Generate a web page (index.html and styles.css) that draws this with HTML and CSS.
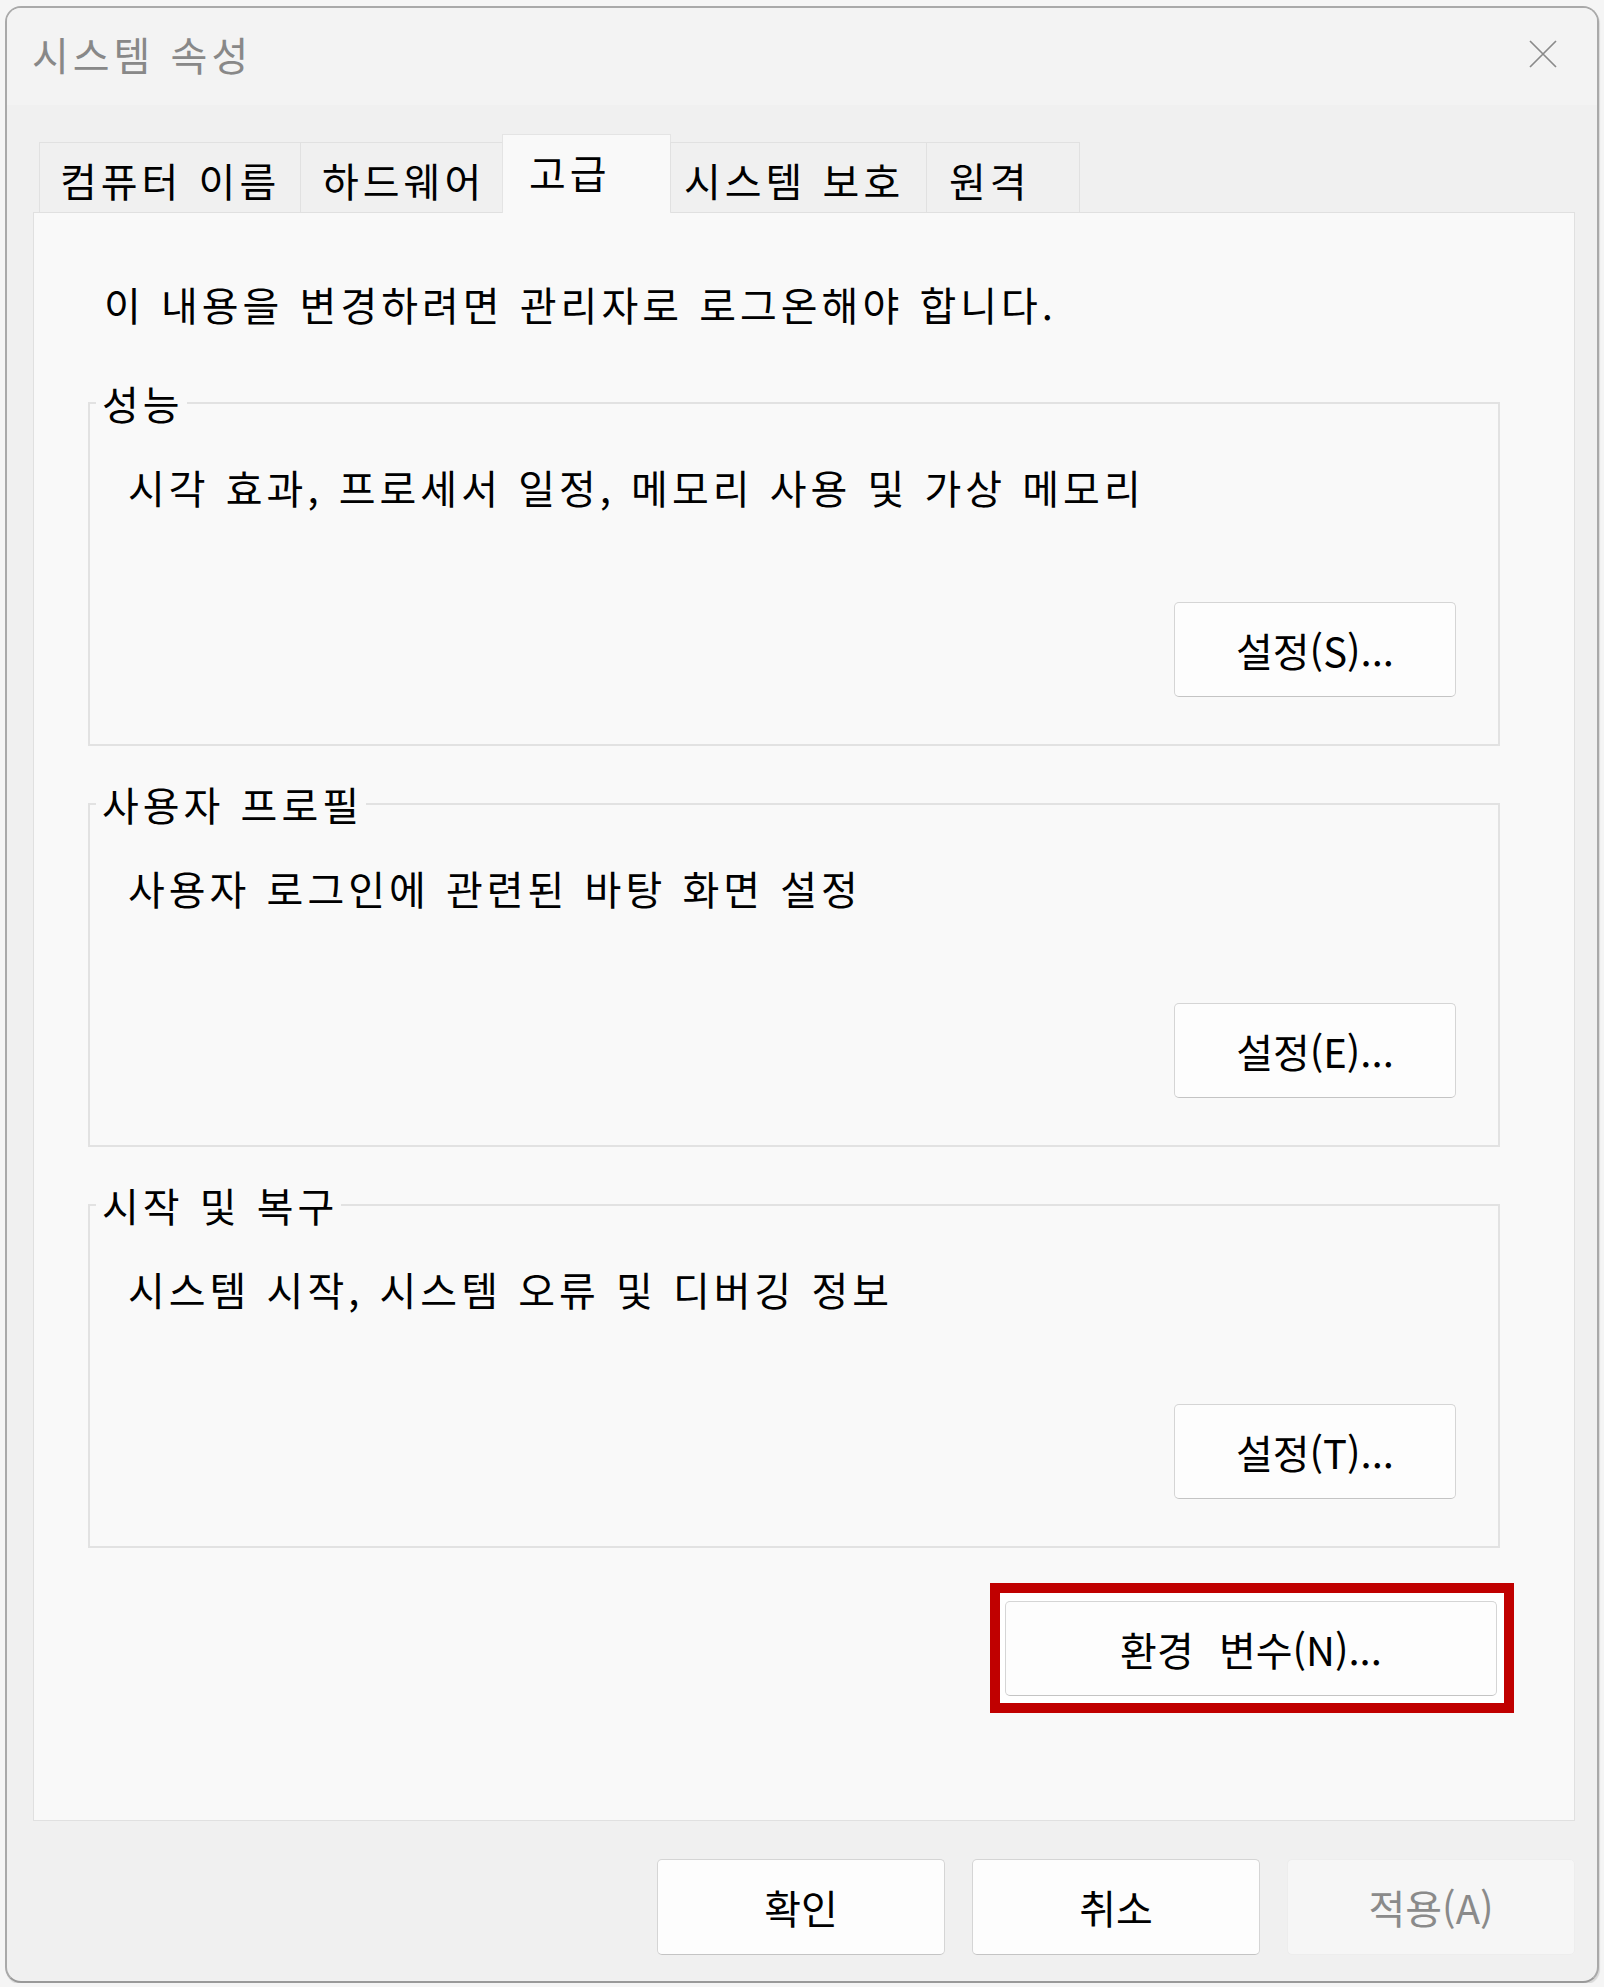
FILE: index.html
```html
<!DOCTYPE html>
<html lang="ko">
<head>
<meta charset="utf-8">
<title>시스템 속성</title>
<link rel="stylesheet" href="styles.css">
</head>
<body>
<div class="window">
  <div class="titlebar">
    <span class="title">시스템 속성</span>
    <svg class="close" viewBox="0 0 28 28" aria-label="닫기"><path d="M1 1L27 27M27 1L1 27" fill="none" stroke="#8a8a8a" stroke-width="1.7"/></svg>
  </div>
  <div class="content">
    <div class="tabs">
      <div class="tab t1">컴퓨터 이름</div>
      <div class="tab t2">하드웨어</div>
      <div class="tab t3 active">고급</div>
      <div class="tab t4">시스템 보호</div>
      <div class="tab t5">원격</div>
    </div>
    <div class="panel">
      <p class="notice">이 내용을 변경하려면 관리자로 로그온해야 합니다.</p>
      <fieldset class="group">
        <legend>성능</legend>
        <p class="desc">시각 효과, 프로세서 일정, 메모리 사용 및 가상 메모리</p>
        <div class="btnrow"><button class="btn">설정(S)...</button></div>
      </fieldset>
      <fieldset class="group">
        <legend>사용자 프로필</legend>
        <p class="desc">사용자 로그인에 관련된 바탕 화면 설정</p>
        <div class="btnrow"><button class="btn">설정(E)...</button></div>
      </fieldset>
      <fieldset class="group">
        <legend>시작 및 복구</legend>
        <p class="desc">시스템 시작, 시스템 오류 및 디버깅 정보</p>
        <div class="btnrow"><button class="btn">설정(T)...</button></div>
      </fieldset>
      <div class="envrow">
        <div class="highlight"><button class="btn wide">환경 변수(N)...</button></div>
      </div>
    </div>
    <div class="actions">
      <button class="btn action">확인</button>
      <button class="btn action">취소</button>
      <button class="btn action disabled">적용(A)</button>
    </div>
  </div>
</div>
</body>
</html>
```
FILE: styles.css
```css
* { box-sizing: border-box; }
html, body { margin: 0; }
body {
  background: #f5f5f5;
  font-family: "Noto Sans CJK KR", "Noto Sans", sans-serif;
  font-size: 40px;
  color: #000;
  letter-spacing: 4px;
  word-spacing: 1px;
}
.window {
  margin: 6px 0 0 5px;
  width: 1594px;
  height: 1977px;
  border: 2px solid #a9a9a9;
  border-bottom-color: #999;
  border-radius: 16px;
  background: #f0f0f0;
  overflow: hidden;
  display: flex;
  flex-direction: column;
  box-shadow: 1px 2px 1px rgba(0, 0, 0, 0.12);
}
.titlebar {
  height: 97px;
  flex: none;
  background: #f3f3f3;
  display: flex;
  align-items: center;
  justify-content: space-between;
  padding: 0 40px 5px 25px;
}
.title { color: #888; line-height: 48px; }
.close { width: 28px; height: 28px; display: block; }
.content {
  flex: 1;
  padding: 29px 22px 0 26px;
  display: flex;
  flex-direction: column;
}
.tabs {
  display: flex;
  align-items: flex-end;
  height: 78px;
  margin-left: 6px;
  position: relative;
  z-index: 1;
}
.tab {
  height: 70px;
  padding-top: 13px;
  line-height: 48px;
  border: 1px solid #e1e1e1;
  border-bottom: none;
  margin-right: -1px;
  background: #f0f0f0;
  white-space: nowrap;
}
.tab.active {
  height: 79px;
  margin-bottom: -1px;
  padding-top: 13px;
  background: #f9f9f9;
  border-color: #e4e4e4;
}
.t1 { width: 262px; padding-left: 20px; }
.t2 { width: 203px; padding-left: 21px; }
.t3 { width: 169px; padding-left: 26px; }
.t4 { width: 257px; padding-left: 13px; }
.t5 { width: 154px; padding-left: 22px; }
.panel {
  background: #f9f9f9;
  border: 1px solid #e0e0e0;
  padding: 67px 60px 107px 54px;
}
.notice { margin: 0; padding-left: 16px; line-height: 48px; }
.group {
  margin: 51px 14px 0 0;
  border: 2px solid #e2e2e2;
  padding: 0 0 47px 0;
  min-width: 0;
}
.group + .group { margin-top: 34px; }
.group legend {
  padding: 0 3px 0 6px;
  margin-left: 6px;
  line-height: 48px;
}
.desc { margin: 36px 0 0 0; padding-left: 38px; line-height: 48px; }
.btnrow {
  display: flex;
  justify-content: flex-end;
  margin-top: 91px;
  padding-right: 42px;
}
.btn {
  font: inherit;
  letter-spacing: 0;
  word-spacing: 14px;
  color: #000;
  background: #fdfdfd;
  border: 1px solid #d5d5d5;
  border-bottom-color: #c4c4c4;
  border-radius: 5px;
  width: 282px;
  height: 95px;
  padding: 0;
  line-height: 48px;
}
.envrow {
  display: flex;
  justify-content: flex-end;
  margin-top: 35px;
}
.highlight {
  border: 10px solid #c00000;
  background: #ffffff;
  padding: 8px 7px 7px 5px;
}
.btn.wide { width: 492px; display: block; }
.actions {
  display: flex;
  justify-content: flex-end;
  gap: 27px;
  margin-top: 38px;
}
.btn.action { width: 288px; height: 96px; }
.btn.disabled {
  background: #f6f6f6;
  border-color: #ededed;
  color: #8a8a8a;
}
```
